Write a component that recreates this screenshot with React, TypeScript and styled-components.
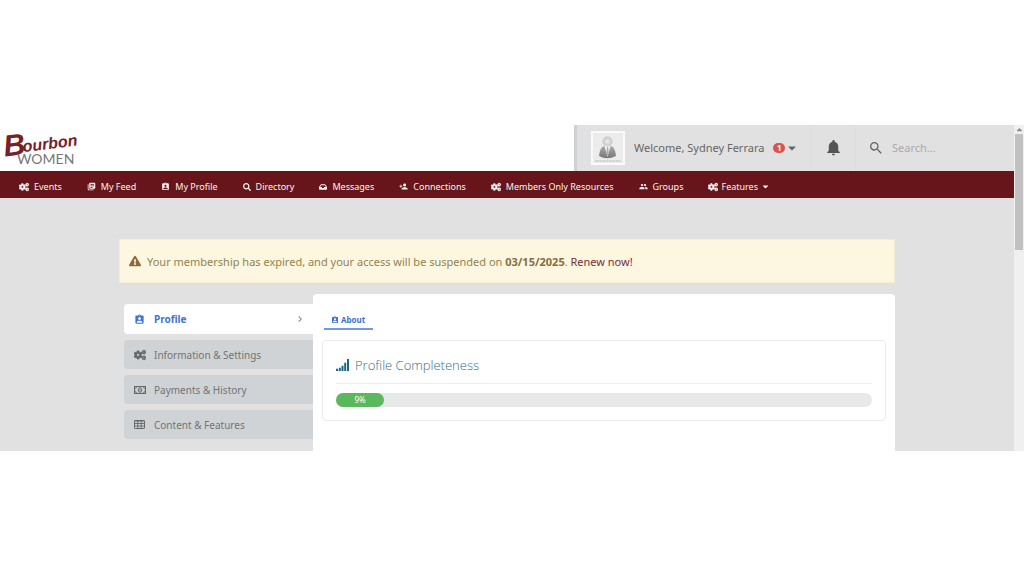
import React from 'react';
import styled, { createGlobalStyle } from 'styled-components';
import { FaCogs, FaSearch, FaInbox, FaCaretDown, FaCaretUp, FaExclamationTriangle } from 'react-icons/fa';
import { MdLibraryBooks, MdAssignmentInd, MdPersonAdd, MdPeople, MdNotifications, MdSearch, MdChevronRight } from 'react-icons/md';

const sans = "'Noto Sans', 'Open Sans', sans-serif";

const GlobalStyle = createGlobalStyle`
  * { box-sizing: border-box; }
  body { margin: 0; background: #fff; font-family: ${sans}; color: #666; }
  button, input { font-family: inherit; }
  a { text-decoration: none; }
  svg { display: block; flex: none; }
`;

const Frame = styled.div`
  display: flex;
  margin: 125px 0;
`;

const Page = styled.div`
  flex: 1;
  min-width: 0;
  background: #e1e1e1;
`;

const Header = styled.header`
  display: flex;
  justify-content: space-between;
  height: 46px;
  background: #fff;
`;

const Logo = styled.a`
  display: block;
  padding-left: 4px;
`;

const UserBar = styled.div`
  display: flex;
  align-items: stretch;
  width: 440px;
  padding-bottom: 1px;
  background: #e1e1e1;
  border-left: 3px solid #cdd2d5;
`;

const Account = styled.button`
  display: flex;
  align-items: center;
  width: 234px;
  padding: 0 0 0 14px;
  border: 0;
  border-right: 1px solid #dcdcdc;
  background: none;
  color: #666;
  font-size: 11px;
  text-align: left;
  white-space: nowrap;
`;

const Avatar = styled.span`
  margin-right: 9px;
  border: 2px solid #fafafa;
  background: #ececec;
`;

const Badge = styled.span`
  width: 12px;
  margin: 0 1px 0 9px;
  border-radius: 5px;
  background: #d9534f;
  color: #fff;
  font-size: 8px;
  font-weight: 700;
  line-height: 10px;
  text-align: center;
`;

const BellButton = styled.button`
  display: flex;
  align-items: center;
  justify-content: center;
  width: 45px;
  padding: 0;
  border: 0;
  border-right: 1px solid #dcdcdc;
  background: none;
  color: #555;
`;

const SearchLabel = styled.label`
  display: flex;
  flex: 1;
  align-items: center;
  gap: 8px;
  min-width: 0;
  padding-left: 12px;
  color: #666;
`;

const SearchInput = styled.input`
  flex: 1;
  min-width: 0;
  padding: 0;
  border: 0;
  outline: 0;
  background: none;
  font-size: 11px;
  &::placeholder { color: #aaa; opacity: 1; }
`;

const Nav = styled.nav`
  display: flex;
  align-items: center;
  gap: 25px;
  height: 27px;
  padding: 4px 0 0 19px;
  background: #67151a;
`;

const NavLink = styled.a<{ $tight?: boolean }>`
  display: flex;
  align-items: center;
  gap: ${p => (p.$tight ? 3 : 5)}px;
  color: #fbf3f3;
  font-size: 9px;
  line-height: 12px;
  white-space: nowrap;
`;

const Gears = styled(FaCogs)`
  stroke: currentColor;
  stroke-width: 28;
`;

const Content = styled.main`
  max-width: 776px;
  margin: 0 auto;
  padding-top: 41px;
`;

const Alert = styled.div`
  display: flex;
  align-items: center;
  gap: 6px;
  height: 44px;
  margin-bottom: 11px;
  padding: 0 9px;
  border: 1px solid #f5ecd3;
  background: #fdf6e1;
  color: #94834d;
  font-size: 11px;
  svg { color: #8a6d3b; }
  strong { color: #8a6d3b; }
  a { color: #752f38; }
`;

const Columns = styled.div`
  display: flex;
  align-items: stretch;
`;

const Side = styled.nav`
  display: flex;
  flex-direction: column;
  gap: 6px;
  width: 194px;
  padding: 10px 0 11px 5px;
`;

const SideLink = styled.a<{ $active?: boolean }>`
  display: flex;
  align-items: center;
  gap: 8px;
  height: ${p => (p.$active ? 30 : 29)}px;
  padding: 0 7px 0 9px;
  border-radius: 4px 0 0 4px;
  background: ${p => (p.$active ? '#fff' : '#cfd3d6')};
  color: ${p => (p.$active ? '#3f74d6' : '#747474')};
  font-size: 10px;
  font-weight: ${p => (p.$active ? 700 : 400)};
  white-space: nowrap;
`;

const SideIcon = styled.span<{ $active?: boolean }>`
  display: flex;
  justify-content: center;
  width: 13px;
  color: ${p => (p.$active ? '#3f74d6' : '#666')};
`;

const SideText = styled.span`
  flex: 1;
`;

const Panel = styled.section`
  flex: 1;
  min-width: 0;
  padding: 17px 9px 30px;
  border-radius: 4px 4px 0 0;
  background: #fff;
`;

const Tab = styled.button`
  display: flex;
  align-items: center;
  gap: 2px;
  height: 19px;
  margin: 0 0 10px 2px;
  padding: 0 8px 0 7px;
  border: 0;
  border-bottom: 2px solid #6f9add;
  background: none;
  color: #3f6fd8;
  font-size: 8px;
  font-weight: 700;
`;

const Card = styled.section`
  padding: 13px;
  border: 1px solid #ececee;
  border-radius: 4px;
`;

const CardTitle = styled.h2`
  display: flex;
  align-items: center;
  gap: 6px;
  height: 30px;
  margin: 0 0 9px;
  padding-bottom: 8px;
  border-bottom: 1px solid #eee;
  color: #33708a;
  font-family: 'Open Sans', sans-serif;
  font-size: 13px;
  font-weight: 300;
`;

const Track = styled.div`
  height: 14px;
  border-radius: 7px;
  background: #e7e8ea;
`;

const Fill = styled.div`
  height: 14px;
  border-radius: 7px;
  background: #5cb85c;
  color: #fff;
  font-size: 8px;
  line-height: 14px;
  text-align: center;
`;

const Scrollbar = styled.div`
  display: flex;
  flex-direction: column;
  align-items: center;
  width: 10px;
  background: #f0f0f0;
  color: #8a8a8a;
`;

const Thumb = styled.div`
  width: 8px;
  height: 116px;
  background: #c1c1c1;
`;

const MoneyIcon = () => (
  <svg width="12" height="8" viewBox="0 0 24 16" fill="none" stroke="currentColor" strokeWidth="2.2">
    <rect x="1.1" y="1.1" width="21.8" height="13.8" />
    <path d="M2 5Q5 5 5 2M19 2Q19 5 22 5M2 11Q5 11 5 14M19 14Q19 11 22 11" strokeWidth="1.4" />
    <ellipse cx="12" cy="8" rx="3.6" ry="4.4" strokeWidth="1.8" />
    <path d="M12 5.500v5" strokeWidth="1.8" />
  </svg>
);

const TableIcon = () => (
  <svg width="11" height="9" viewBox="0 0 11 9" fill="none" stroke="currentColor">
    <rect x=".5" y=".5" width="10" height="8" rx=".6" />
    <path d="M.5 1h10M.5 3.500h10M.5 6h10M3.800 1v7.500M7.200 1v7.500" strokeWidth=".9" />
  </svg>
);

const SignalIcon = () => (
  <svg width="13" height="12" viewBox="0 0 13 12" fill="#1d6489">
    <path d="M0 9.8h2V12H0zM2.8 8.8h2V12h-2zM5.5 6.8h2V12h-2zM8.2 3.8h2V12h-2zM11 0h2v12h-2z" />
  </svg>
);

const Portrait = () => (
  <svg width="30" height="30" viewBox="0 0 30 30">
    <defs>
      <linearGradient id="suit" x1="0" y1="0" x2="0" y2="1">
        <stop offset="0" stopColor="#aaa" />
        <stop offset="1" stopColor="#777" />
      </linearGradient>
      <radialGradient id="head">
        <stop offset="0" stopColor="#ededed" />
        <stop offset="1" stopColor="#c6c6c6" />
      </radialGradient>
    </defs>
    <path d="M11 13Q7 14 6 23Q14 27.500 23 23Q22 14 18 13Z" fill="url(#suit)" />
    <path d="M11.500 13L14.500 24L17.500 13Z" fill="#f6f6f6" />
    <path d="M14 14h1.200l.5 6-1.200 3-1.100-3z" fill="#aaa" />
    <circle cx="14.500" cy="8.500" r="5" fill="url(#head)" />
    <path d="M2 28h26" stroke="#bbb" strokeWidth="1.200" strokeDasharray="3 .5" />
  </svg>
);

const LogoMark = () => (
  <svg width="90" height="44" viewBox="0 0 90 44" role="img" aria-label="Bourbon Women">
    <g fill="#782029" fontFamily="'Liberation Sans Narrow', 'Liberation Sans', sans-serif" fontStyle="italic" fontWeight="700" transform="rotate(-7 4 34)">
      <text x="1" y="31" fontSize="30">B</text>
      <text x="20" y="29" fontSize="16">ourbon</text>
    </g>
    <text x="13" y="39" fill="#777" fontFamily="Lato, sans-serif" fontSize="14">WOMEN</text>
  </svg>
);

const links = [
  { label: 'Events', icon: <Gears size={10} /> },
  { label: 'My Feed', icon: <MdLibraryBooks size={9} /> },
  { label: 'My Profile', icon: <MdAssignmentInd size={9} /> },
  { label: 'Directory', icon: <FaSearch size={8} /> },
  { label: 'Messages', icon: <FaInbox size={8} /> },
  { label: 'Connections', icon: <MdPersonAdd size={9} /> },
  { label: 'Members Only Resources', icon: <Gears size={10} /> },
  { label: 'Groups', icon: <MdPeople size={9} /> },
];

const sections = [
  { label: 'Profile', icon: <MdAssignmentInd size={11} />, active: true },
  { label: 'Information & Settings', icon: <Gears size={12} /> },
  { label: 'Payments & History', icon: <MoneyIcon /> },
  { label: 'Content & Features', icon: <TableIcon /> },
];

export default function App() {
  const completeness = 9;
  return (
    <>
      <GlobalStyle />
      <Frame>
        <Page>
          <Header>
            <Logo href="#"><LogoMark /></Logo>
            <UserBar>
              <Account type="button">
                <Avatar><Portrait /></Avatar>
                Welcome, Sydney Ferrara
                <Badge>1</Badge>
                <FaCaretDown size={12} />
              </Account>
              <BellButton type="button" aria-label="Notifications"><MdNotifications size={19} /></BellButton>
              <SearchLabel>
                <MdSearch size={16} />
                <SearchInput type="search" placeholder="Search..." aria-label="Search" />
              </SearchLabel>
            </UserBar>
          </Header>
          <Nav>
            {links.map(link => (
              <NavLink href="#" key={link.label}>{link.icon}{link.label}</NavLink>
            ))}
            <NavLink href="#" $tight><Gears size={10} />Features <FaCaretDown size={9} /></NavLink>
          </Nav>
          <Content>
            <Alert role="alert">
              <FaExclamationTriangle size={12} />
              <span>
                Your membership has expired, and your access will be suspended on <strong>03/15/2025</strong>. <a href="#">Renew now!</a>
              </span>
            </Alert>
            <Columns>
              <Side>
                {sections.map(s => (
                  <SideLink href="#" key={s.label} $active={s.active}>
                    <SideIcon $active={s.active}>{s.icon}</SideIcon>
                    <SideText>{s.label}</SideText>
                    {s.active && <MdChevronRight size={12} color="#888" />}
                  </SideLink>
                ))}
              </Side>
              <Panel>
                <Tab type="button"><MdAssignmentInd size={8} />About</Tab>
                <Card>
                  <CardTitle><SignalIcon />Profile Completeness</CardTitle>
                  <Track>
                    <Fill style={{ width: `${completeness}%` }}>{completeness}%</Fill>
                  </Track>
                </Card>
              </Panel>
            </Columns>
          </Content>
        </Page>
        <Scrollbar>
          <FaCaretUp size={9} />
          <Thumb />
        </Scrollbar>
      </Frame>
    </>
  );
}
